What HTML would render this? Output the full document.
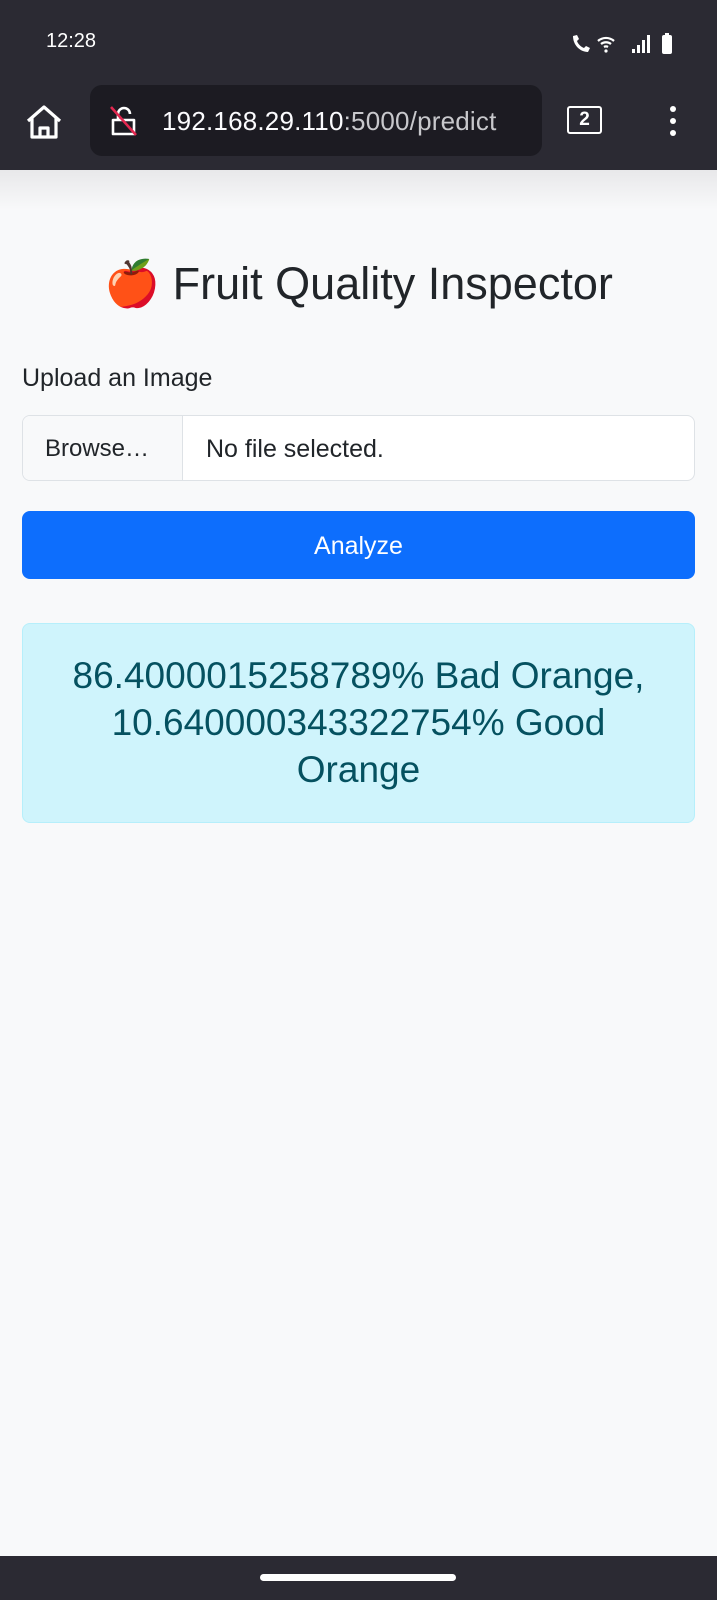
<!DOCTYPE html>
<html><head><meta charset="utf-8"><style>
*{margin:0;padding:0;box-sizing:border-box}
body{width:717px;height:1600px;background:#f8f9fa;font-family:"Liberation Sans",sans-serif;position:relative;overflow:hidden}
.top{position:absolute;left:0;top:0;width:717px;height:170px;background:#2b2a33}
.time{position:absolute;left:46px;top:30px;color:#fff;font-size:20px}
.url{position:absolute;left:90px;top:85px;width:452px;height:71px;background:#1c1b22;border-radius:12px}
.urltxt{position:absolute;left:72px;top:21px;color:#fbfbfe;font-size:26px;letter-spacing:0.2px}
.shadow{position:absolute;left:0;top:170px;width:717px;height:40px;background:linear-gradient(#e8e8ea,#f8f9fa)}
h1{position:absolute;left:0;top:257px;width:717px;text-align:center;font-size:45px;font-weight:normal;color:#212529}
.lbl{position:absolute;left:22px;top:364px;font-size:25px;color:#212529}
.file{position:absolute;left:22px;top:415px;width:673px;height:66px;background:#fff;border:1px solid #dee2e6;border-radius:8px;overflow:hidden}
.browse{position:absolute;left:0;top:0;width:160px;height:64px;background:#f8f9fa;border-right:1px solid #dee2e6;font-size:24px;color:#212529;padding:19px 0 0 22px}
.nf{position:absolute;left:183px;top:19px;font-size:25px;color:#212529}
.btn{position:absolute;left:22px;top:511px;width:673px;height:68px;background:#0d6efd;border-radius:8px;color:#fff;font-size:25px;text-align:center;line-height:70px}
.alert{position:absolute;left:22px;top:623px;width:673px;height:200px;background:#cff4fc;border:1px solid #b6effb;border-radius:8px;color:#055160;font-size:37px;text-align:center;line-height:47px;padding-top:28px}
.nav{position:absolute;left:0;top:1556px;width:717px;height:44px;background:#2b2a33}
.pill{position:absolute;left:260px;top:18px;width:196px;height:7px;border-radius:4px;background:#fff}
</style></head><body>
<div class="top">
<div class="time">12:28</div>
<svg style="position:absolute;left:570px;top:32px" width="110" height="24" viewBox="0 0 110 24">
<path d="M3 4c0 9 7 16 15 16l2-4-4-2-2 2c-3-1-6-4-7-7l2-2-2-4z" fill="#fff"/>
<path d="M28 9a12 12 0 0 1 16 0M31 12a8 8 0 0 1 10 0M34 15a4 4 0 0 1 4 0" stroke="#fff" stroke-width="2.2" fill="none"/>
<circle cx="36" cy="19" r="1.6" fill="#fff"/>
<rect x="62" y="17" width="3" height="4" fill="#fff"/><rect x="67" y="13" width="3" height="8" fill="#fff"/><rect x="72" y="8" width="3" height="13" fill="#fff"/><rect x="77" y="3" width="3" height="18" fill="#fff"/>
<rect x="92" y="3" width="10" height="19" rx="2" fill="#fff"/><rect x="95" y="1" width="4" height="3" fill="#fff"/>
</svg>
<svg style="position:absolute;left:24px;top:104px" width="40" height="36" viewBox="0 0 40 36"><path d="M4 17L20 3l16 14M8 14v19h24V14M16 33v-9h8v9" stroke="#fff" stroke-width="3.2" fill="none" stroke-linejoin="round"/></svg>
<div class="url">
<svg style="position:absolute;left:18px;top:18px" width="36" height="36" viewBox="0 0 36 36"><path d="M5 17h21v14H5z" stroke="#fff" stroke-width="2.6" fill="none" stroke-linejoin="round"/><path d="M10 17v-6a6 6 0 0 1 12 0" stroke="#fff" stroke-width="2.6" fill="none"/><path d="M3 4l25 28" stroke="#e22850" stroke-width="2.6"/></svg>
<div class="urltxt">192.168.29.110<span style="color:#c8c8cc">:5000/predict</span></div>
</div>
<div style="position:absolute;left:567px;top:106px;width:35px;height:28px;border:2.5px solid #fff;border-radius:3px;color:#fff;font-size:19px;font-weight:bold;text-align:center;line-height:23px">2</div>
<div style="position:absolute;left:670px;top:106px;width:6px;height:6px;background:#fff;border-radius:3px;box-shadow:0 12px 0 #fff,0 24px 0 #fff"></div>
</div>
<div class="shadow"></div>
<h1>🍎 Fruit Quality Inspector</h1>
<div class="lbl">Upload an Image</div>
<div class="file"><div class="browse">Browse…</div><div class="nf">No file selected.</div></div>
<div class="btn">Analyze</div>
<div class="alert">86.4000015258789% Bad Orange,<br>10.640000343322754% Good<br>Orange</div>
<div class="nav"><div class="pill"></div></div>
</body></html>
